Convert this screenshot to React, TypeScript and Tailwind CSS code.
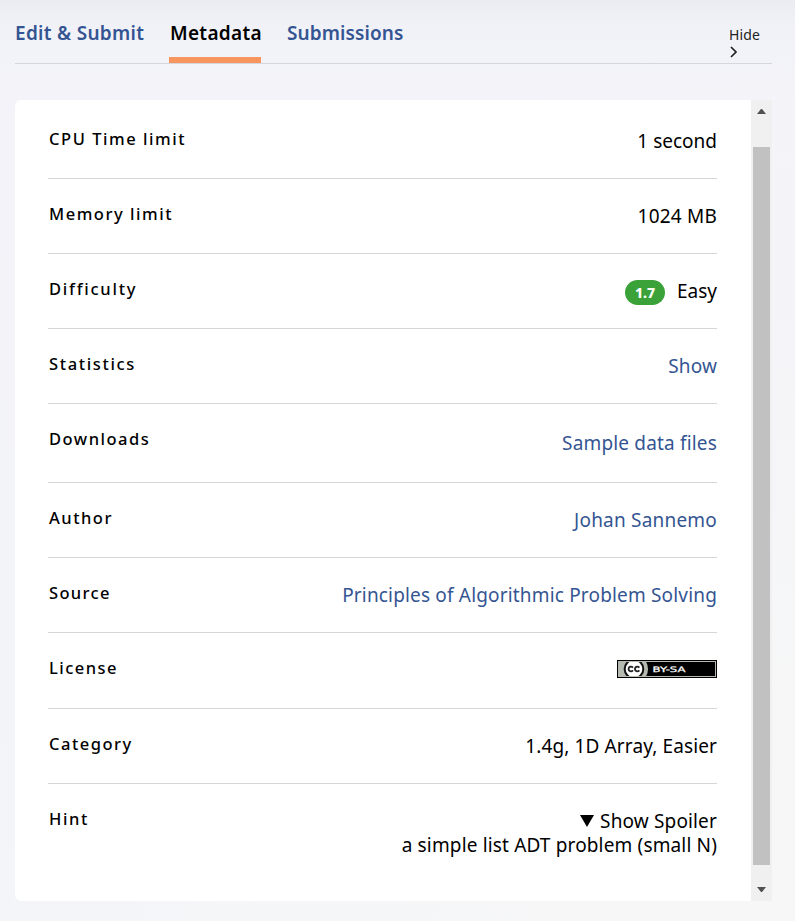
import type { ReactNode } from "react";

type RowProps = { label: string; labelClass: string; rowClass?: string; last?: boolean; children: ReactNode };

function Row({ label, labelClass, rowClass = "h-[75px]", last = false, children }: RowProps) {
  return (
    <div className={`flex items-start justify-between whitespace-nowrap ${rowClass} ${last ? "" : "border-b border-[#d6d6d8]"}`}>
      <span className={`ml-px pt-[23px] text-[16.5px] leading-6 font-medium ${labelClass}`}>{label}</span>
      {children}
    </div>
  );
}

const value = "pt-[25px] text-[19px] leading-6";
const link = "pt-[25px] text-[19px] leading-6 text-[#345592]";

function LicenseBadge() {
  return (
    <svg width="100" height="18" viewBox="0 0 100 18" role="img" aria-label="Creative Commons BY-SA">
      <clipPath id="badge-inner"><rect x="2" y="2" width="96" height="14" /></clipPath>
      <rect width="100" height="18" fill="#000" />
      <rect x="1.5" y="1.5" width="97" height="15" fill="#000" stroke="#b5bab1" />
      <g clipPath="url(#badge-inner)">
        <rect x="2" y="2" width="18" height="14" fill="#b5bab1" />
        <circle cx="17" cy="9" r="14" fill="#b5bab1" />
        <circle cx="17" cy="9" r="10.3" fill="#111" />
        <circle cx="17" cy="9" r="8.3" fill="#fff" />
      </g>
      <path d="M16 7.6Q15 6.6 13.7 6.7Q11.6 7 11.6 9T13.7 11.3Q15 11.4 16 10.4M22.4 7.6Q21.4 6.6 20.1 6.7Q18 7 18 9T20.1 11.3Q21.4 11.4 22.4 10.4" fill="none" stroke="#222" strokeWidth="1.8" />
      <text x="35.5" y="12" fill="#fff" stroke="#fff" strokeWidth="0.25" fontFamily="DejaVu Sans, sans-serif" fontSize="7.5" textLength="33" lengthAdjust="spacingAndGlyphs">BY-SA</text>
    </svg>
  );
}

export default function App() {
  return (
    <div className="h-[921px] w-[795px] overflow-hidden bg-[radial-gradient(ellipse_at_bottom_right,#f7f7f7_0%,#f7f7f700_70%),linear-gradient(to_bottom,#ebecf1_0px,#f1f2f8_26px,#f3f3f9_100px,#f4f5f8_921px)] pl-[15px] font-['Noto_Sans','Open_Sans',sans-serif] text-black">
      <header className="flex h-16 w-[757px] items-start justify-between border-b border-[#d6d6dc] whitespace-nowrap">
        <nav className="flex h-[63px] text-[19px] leading-6 font-semibold text-[#345592]">
          <a className="w-[154px] pt-[21px] tracking-[0.3px]">Edit &amp; Submit</a>
          <a className="mr-[26px] w-[92px] border-b-[6px] border-[#f6955d] pt-[21px] pl-px tracking-[0.3px] text-black">Metadata</a>
          <a className="pt-[21px] tracking-[0.1px]">Submissions</a>
        </nav>
        <button className="w-11 pt-[25px] pl-px text-left text-[14px] leading-[20px] tracking-[0.1px] text-[#222]">
          Hide
          <svg width="10" height="12" viewBox="0 0 10 12" className="mt-px block" fill="none" stroke="#222" strokeWidth="1.7">
            <path d="M2 1L7 6L2 11" />
          </svg>
        </button>
      </header>
      <main className="mt-9 flex h-[801px] w-[757px] overflow-hidden rounded-l-md bg-white">
        <div className="w-[736px] pt-1 pr-[34px] pl-[33px]">
          <Row label="CPU Time limit" labelClass="tracking-[1.55px]"><span className={value}>1 second</span></Row>
          <Row label="Memory limit" labelClass="tracking-[1.53px]"><span className={`${value} tracking-[0.2px]`}>1024 MB</span></Row>
          <Row label="Difficulty" labelClass="tracking-[1.75px]">
            <span className="flex items-start pt-[25px] text-[19px] leading-6">
              <span className="mt-px mr-3 h-[25px] w-10 rounded-full bg-[#3ba239] text-center text-[14px] leading-[25px] font-extrabold text-white">1.7</span>
              <span>Easy</span>
            </span>
          </Row>
          <Row label="Statistics" labelClass="tracking-[1.65px]"><a className={`${link} tracking-[0.15px]`}>Show</a></Row>
          <Row label="Downloads" labelClass="tracking-[1.5px]" rowClass="h-[79px]"><a className={`${link} mt-0.5 tracking-[0.17px]`}>Sample data files</a></Row>
          <Row label="Author" labelClass="tracking-[1.5px]"><a className={`${link} tracking-[0.2px]`}>Johan Sannemo</a></Row>
          <Row label="Source" labelClass="tracking-[1.35px]"><a className={`${link} tracking-[0.17px]`}>Principles of Algorithmic Problem Solving</a></Row>
          <Row label="License" labelClass="tracking-[1.45px]" rowClass="h-[76px]"><span className="pt-[27px]"><LicenseBadge /></span></Row>
          <Row label="Category" labelClass="tracking-[1.5px]"><span className={`${value} tracking-[0.12px]`}>1.4g, 1D Array, Easier</span></Row>
          <Row label="Hint" labelClass="tracking-[1.6px]" last>
            <div className="pt-[25px] text-right text-[19px] leading-6 tracking-[0.15px]">
              <div className="flex items-center justify-end">
                <svg width="14" height="12" viewBox="0 0 14 12" className="mr-[6px]"><path d="M0 0H14L7 12Z" /></svg>
                <span>Show Spoiler</span>
              </div>
              <div>a simple list ADT problem (small N)</div>
            </div>
          </Row>
        </div>
        <div className="flex w-[21px] flex-col items-center bg-[#f0f0f0]">
          <svg width="9" height="5" viewBox="0 0 9 5" className="mt-[9px]"><path d="M4 0H5L9 5H0Z" fill="#505050" /></svg>
          <div className="mt-[33px] h-[718px] w-[17px] bg-[#c1c1c1]" />
          <svg width="9" height="5" viewBox="0 0 9 5" className="mt-[22px]"><path d="M0 0H9L5 5H4Z" fill="#505050" /></svg>
        </div>
      </main>
    </div>
  );
}
